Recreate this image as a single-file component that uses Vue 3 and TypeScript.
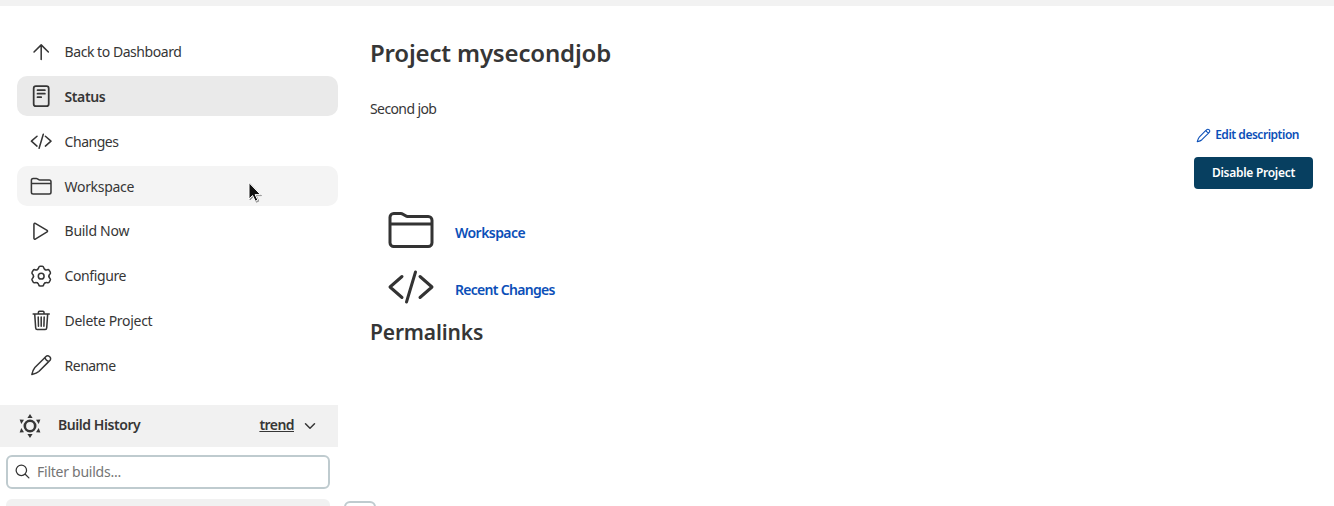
<script setup lang="ts">
interface Task {
  label: string
  icon: string
  tracking: number
  state?: string
}

const tasks: Task[] = [
  { label: 'Back to Dashboard', icon: 'up', tracking: -0.45 },
  { label: 'Status', icon: 'document', tracking: -0.42, state: 'active' },
  { label: 'Changes', icon: 'code', tracking: -0.47 },
  { label: 'Workspace', icon: 'folder', tracking: -0.32, state: 'hover' },
  { label: 'Build Now', icon: 'play', tracking: -0.28 },
  { label: 'Configure', icon: 'settings', tracking: -0.4 },
  { label: 'Delete Project', icon: 'trash', tracking: -0.3 },
  { label: 'Rename', icon: 'pencil', tracking: -0.52 },
]

const lobes: number[] = [0, 60, 120, 180, 240, 300]
</script>

<template>
  <svg class="defs" aria-hidden="true">
    <symbol id="up" viewBox="0 0 512 512"><path d="M92 252L256 88l164 164M256 98v324" /></symbol>
    <symbol id="document" viewBox="0 0 512 512">
      <rect x="84" y="28" width="344" height="456" rx="52" />
      <path d="M172 120h168M172 200h168M172 280h84" />
    </symbol>
    <symbol id="code" viewBox="0 0 512 512"><path d="M160 368L32 256l128-112M352 368l128-112-128-112M304 96l-96 320" /></symbol>
    <symbol id="folder" viewBox="0 0 512 512">
      <path d="M440 432H72a40 40 0 01-40-40V120a40 40 0 0140-40h75.89a40 40 0 0122.19 6.72l27.84 18.56a40 40 0 0022.19 6.72H440a40 40 0 0140 40v240a40 40 0 01-40 40zM32 192h448" />
    </symbol>
    <symbol id="play" viewBox="0 0 512 512"><path d="M90 96v320c0 17.44 17 28.52 31 20.16l270-163.37c12.12-7.25 12.12-26.33 0-33.58L121 75.84c-14-8.36-31 2.72-31 20.16z" /></symbol>
    <symbol id="settings" viewBox="0 0 512 512">
      <circle cx="256" cy="256" r="66" />
      <path v-for="angle in lobes" :key="angle" :transform="`rotate(${angle} 256 256)`" d="M168 104Q194 90 198 60Q206 30 232 30H280Q306 30 314 60Q318 90 344 104" />
    </symbol>
    <symbol id="trash" viewBox="0 0 512 512">
      <path d="M108 116l22 316c2 22 14 36 34 36h184c20 0 32-14 34-36l22-316M72 116h368M192 112V74a22 22 0 0122-22h84a22 22 0 0122 22v38M256 184v212M188 184l6 212M324 184l-6 212" />
    </symbol>
    <symbol id="pencil" viewBox="-8 -8 528 528">
      <path d="M322 96L107 312C76 346 52 414 36 476c62-16 130-40 164-71l216-215M322 96l33-33c34-34 65-38 94-13l13 13c25 29 21 60-13 94l-33 33M350 68c-10 38 48 100 94 94" />
    </symbol>
    <symbol id="search" viewBox="0 0 512 512"><path d="M221.09 64a157.09 157.09 0 10157.09 157.09A157.1 157.1 0 00221.09 64zM338.29 338.29L448 448" /></symbol>
    <symbol id="chevron" viewBox="0 0 512 512"><path d="M112 184l144 144 144-144" /></symbol>
  </svg>

  <div class="page">
    <div class="crumbs"></div>
    <div class="body">
      <aside class="side">
        <nav class="tasks">
          <a v-for="task in tasks" :key="task.label" class="task" :class="task.state">
            <svg class="icon"><use :href="'#' + task.icon" /></svg>
            <span :style="{ letterSpacing: task.tracking + 'px' }">{{ task.label }}</span>
          </a>
        </nav>
        <section class="history">
          <header class="history-head">
            <svg class="weather" viewBox="0 0 24 24">
              <circle cx="12" cy="12" r="5.2" />
              <path d="M12 0l2.600 4H9.400zM12 24l2.600-4H9.400zM1.600 5.500l4.400.3-2.700 4.200zM22.400 5.500l-4.400.3 2.700 4.200zM1.600 18.500l4.400-.3-2.700-4.200zM22.400 18.500l-4.400-.3 2.700-4.200z" />
            </svg>
            <span class="history-title">Build History</span>
            <a class="trend">trend</a>
            <svg class="chev"><use href="#chevron" /></svg>
          </header>
          <label class="filter">
            <svg class="search"><use href="#search" /></svg>
            <span>Filter builds...</span>
          </label>
          <div class="build-row"></div>
        </section>
      </aside>
      <div class="stub"></div>
      <main class="main">
        <h1>Project mysecondjob</h1>
        <p class="desc">Second job</p>
        <div class="actions">
          <a class="edit"><svg class="edit-icon"><use href="#pencil" /></svg><span>Edit description</span></a>
          <button class="disable">Disable Project</button>
        </div>
        <div class="links">
          <a class="link"><svg class="big"><use href="#folder" /></svg><span class="link-workspace">Workspace</span></a>
          <a class="link"><svg class="big"><use href="#code" /></svg><span class="link-changes">Recent Changes</span></a>
        </div>
        <h2>Permalinks</h2>
      </main>
    </div>
    <svg class="cursor" viewBox="0 0 14 21">
      <path d="M1 1v16l3.600-3.500 2.700 5.700 2.500-1.100-2.700-5.500h5z" />
    </svg>
  </div>
</template>

<style>
body {
  margin: 0;
  background: #fff;
  overflow: hidden;
}
</style>

<style scoped>
.defs {
  position: absolute;
  width: 0;
  height: 0;
}
svg {
  flex: none;
  fill: none;
  stroke: currentColor;
  stroke-width: 32px;
  stroke-linecap: round;
  stroke-linejoin: round;
}
.page {
  position: relative;
  height: 506px;
  overflow: hidden;
  font: 14px/20px "Noto Sans", sans-serif;
  color: #363636;
}
.crumbs {
  height: 6px;
  background: #f2f2f2;
}
.body {
  display: flex;
  height: 500px;
}
.side {
  width: 338px;
  flex: none;
}
.tasks {
  display: flex;
  flex-direction: column;
  gap: 4.8px;
  padding: 25.4px 0 0 17px;
}
.task {
  display: flex;
  align-items: center;
  height: 40px;
  padding-left: 13px;
  border-radius: 10px;
}
.task span {
  margin: 1.8px 0 0 12.2px;
}
.icon {
  width: 22.4px;
  height: 22.4px;
  margin-top: 0.8px;
  stroke-width: 35px;
}
.active {
  background: #eaeaea;
  font-weight: 600;
}
.active .icon {
  stroke-width: 40px;
}
.hover {
  background: #f4f4f4;
}
.history {
  padding-top: 20px;
}
.history-head {
  display: flex;
  align-items: center;
  height: 42px;
  padding: 0 20px 0 18px;
  background: #f1f1f1;
  font-weight: 600;
}
.weather {
  width: 24px;
  height: 24px;
}
.weather circle {
  stroke-width: 2.6px;
}
.weather path {
  fill: currentColor;
  stroke: none;
}
.history-title {
  flex: 1;
  margin: -1px 0 0 16px;
  letter-spacing: -0.44px;
}
.trend {
  margin-top: -1px;
  letter-spacing: -0.55px;
  text-decoration: underline;
}
.chev {
  width: 16px;
  height: 16px;
  margin-left: 8px;
  stroke-width: 48px;
}
.filter {
  display: flex;
  align-items: center;
  box-sizing: border-box;
  width: 324px;
  height: 34px;
  margin: 8px 0 0 6px;
  padding-left: 6px;
  border: 2px solid #bfcbcf;
  border-radius: 6px;
  color: #757575;
  letter-spacing: -0.25px;
}
.search {
  width: 17px;
  height: 17px;
  margin-right: 6px;
  color: #333;
  stroke-width: 38px;
}
.build-row {
  width: 324px;
  height: 20px;
  margin: 10px 0 0 6px;
  border-radius: 6px;
  background: #f1f1f1;
}
.stub {
  flex: none;
  box-sizing: border-box;
  align-self: flex-end;
  width: 32px;
  height: 32px;
  margin: 0 -6px -27px 6px;
  border: 2px solid #bfcbcf;
  border-radius: 6px;
}
.main {
  flex: 1;
  padding: 30px 21px 0 0;
}
h1 {
  margin: 0;
  font-size: 24px;
  line-height: 34px;
  font-weight: 600;
  letter-spacing: -0.17px;
}
.desc {
  margin: 29px 0 0;
  letter-spacing: -0.6px;
}
.actions {
  display: flex;
  flex-direction: column;
  align-items: flex-end;
  gap: 12px;
  margin-top: 6px;
  font-size: 12px;
  font-weight: 600;
}
.edit {
  display: flex;
  align-items: center;
  height: 20px;
  padding-right: 14px;
  color: #0b4fb8;
  letter-spacing: -0.48px;
}
.edit-icon {
  width: 15px;
  height: 15px;
  margin-right: 4px;
  stroke-width: 38px;
}
.disable {
  width: 119px;
  height: 32px;
  padding: 0;
  border: 0;
  border-radius: 4px;
  background: #073f60;
  color: #fff;
  font: inherit;
  letter-spacing: -0.27px;
}
.links {
  padding: 16px 0 0 17px;
}
.link {
  display: flex;
  align-items: center;
  height: 57px;
  color: #0b4fb8;
  font-weight: 600;
}
.link span {
  margin: -2px 0 0 20px;
}
.link-workspace {
  letter-spacing: -0.55px;
}
.link-changes {
  letter-spacing: -0.7px;
}
.big {
  width: 48px;
  height: 48px;
  margin-top: -8px;
  color: #333;
}
h2 {
  margin: -2px 0 0;
  font-size: 21px;
  line-height: 30px;
  font-weight: 600;
  letter-spacing: -0.15px;
}
.cursor {
  position: absolute;
  left: 248px;
  top: 182px;
  width: 14px;
  height: 21px;
  fill: #111;
  stroke: #fff;
  stroke-width: 1px;
  filter: drop-shadow(1px 1px 0.5px #0006);
}
</style>
